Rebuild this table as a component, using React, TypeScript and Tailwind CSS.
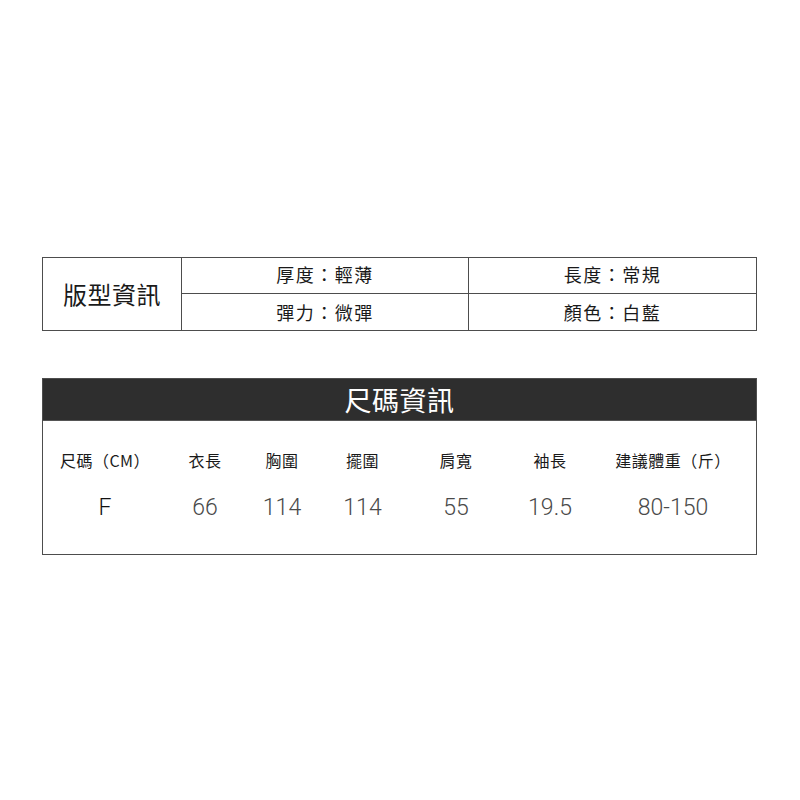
import React from "react";

const font = { fontFamily: '"Noto Sans CJK TC", "Noto Sans", sans-serif' };
const numFont = { fontFamily: 'Roboto, "Noto Sans CJK TC", sans-serif' };

export default function App() {
  const headers = ["尺碼（CM）", "衣長", "胸圍", "擺圍", "肩寬", "袖長", "建議體重（斤）"];
  const values = ["F", "66", "114", "114", "55", "19.5", "80-150"];
  const widths = ["w-[124px]", "w-[76px]", "w-[78px]", "w-[83px]", "w-[104px]", "w-[84px]", "w-[162px]"];
  return (
    <div className="w-[800px] h-[800px] bg-white pt-[257px] pl-[42px]" style={font}>
      <div className="w-[715px] h-[74px] border-[1.5px] border-[#4d4d4d] flex">
        <div className="w-[139px] flex items-center justify-center border-r-[1.5px] border-[#4d4d4d] text-[24px] tracking-[0.5px] text-[#1a1a1a] leading-none">
          版型資訊
        </div>
        <div className="flex-1 grid grid-cols-2 grid-rows-2">
          <div className="flex items-center justify-center pb-[2px] border-r-[1.5px] border-b-[1.5px] border-[#4d4d4d] text-[18px] tracking-[1.5px] text-[#1a1a1a]">厚度：輕薄</div>
          <div className="flex items-center justify-center pb-[2px] border-b-[1.5px] border-[#4d4d4d] text-[18px] tracking-[1.5px] text-[#1a1a1a]">長度：常規</div>
          <div className="flex items-center justify-center border-r-[1.5px] border-[#4d4d4d] text-[18px] tracking-[1.5px] text-[#1a1a1a]">彈力：微彈</div>
          <div className="flex items-center justify-center text-[18px] tracking-[1.5px] text-[#1a1a1a]">顏色：白藍</div>
        </div>
      </div>

      <div className="w-[715px] h-[177px] mt-[47px] border-[1.5px] border-[#4d4d4d] flex flex-col">
        <div className="h-[42px] bg-[#2e2e2e] border-b-[1.5px] border-[#555] flex items-center justify-center text-white text-[27px] tracking-[0.5px] leading-none">
          尺碼資訊
        </div>
        <div className="flex pt-[28px]">
          {headers.map((h, i) => (
            <div key={i} className={`${widths[i]} text-center text-[16px] tracking-[0.5px] text-[#1a1a1a] leading-[22px]`}>{h}</div>
          ))}
        </div>
        <div className="flex pt-[23px]" style={numFont}>
          {values.map((v, i) => (
            <div key={i} className={`${widths[i]} text-center text-[23px] font-light leading-[28px] ${i === 0 ? "text-[#111]" : "text-[#4a4a4a]"}`}>{v}</div>
          ))}
        </div>
      </div>
    </div>
  );
}
